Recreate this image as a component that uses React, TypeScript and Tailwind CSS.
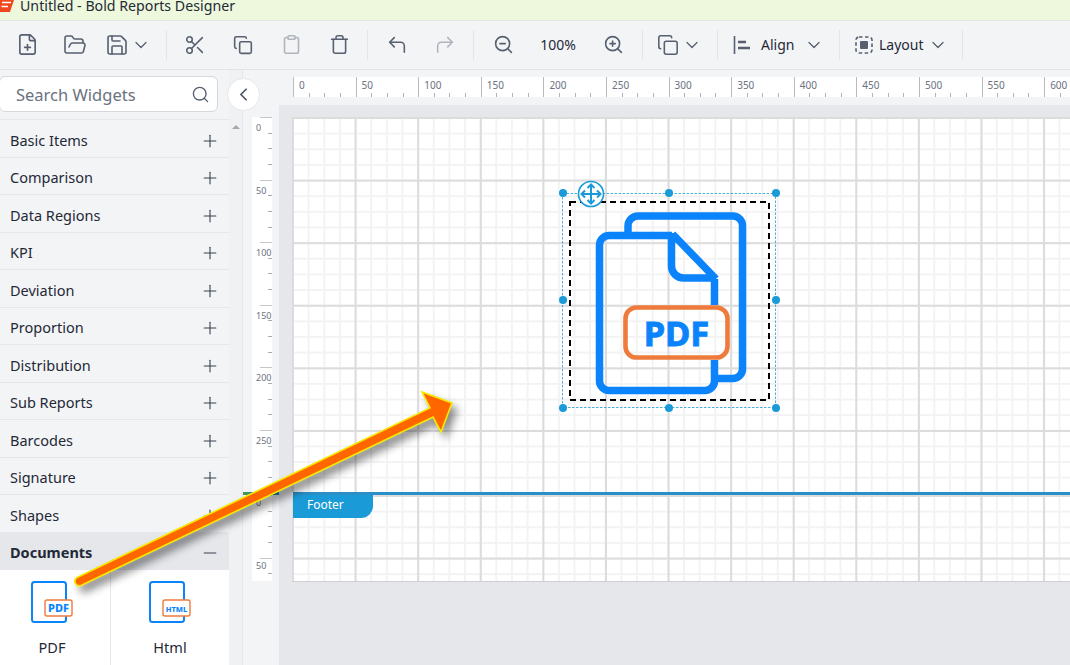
import React from 'react';
import { Plus, Minus, Search, ChevronLeft, ChevronDown, FilePlus, FolderOpen, Save, Scissors, Copy, Clipboard, Trash, CornerUpLeft, CornerUpRight, ZoomIn, ZoomOut } from 'lucide-react';

const widgets = ['Basic Items', 'Comparison', 'Data Regions', 'KPI', 'Deviation', 'Proportion', 'Distribution', 'Sub Reports', 'Barcodes', 'Signature', 'Shapes'];
const gridBg = 'bg-[linear-gradient(to_right,#dcdcdc_2px,transparent_2px),linear-gradient(to_bottom,#dcdcdc_2px,transparent_2px),linear-gradient(to_right,#f3f3f3_1.5px,transparent_1.5px),linear-gradient(to_bottom,#f3f3f3_1.5px,transparent_1.5px)] bg-[size:62.6px_62.6px,62.6px_62.6px,15.65px_15.65px,15.65px_15.65px]';

export default function App() {
  return (
    <div className="relative w-[1070px] h-[665px] overflow-hidden bg-[#f3f4f6] text-[#1f2937] font-['Noto_Sans','Open_Sans',sans-serif]">
      {/* Title bar */}
      <div className="h-[21px] bg-[#eef8dc] border-b border-[#e3e6e3] flex items-start overflow-hidden">
        <svg width="14" height="12" viewBox="0 0 14 12" className="shrink-0">
          <path d="M0 0H14L10 12H0Z" fill="#f0481e" />
          <path d="M2 2.5H11M1.5 6.5H8" stroke="#fff" strokeWidth="1.6" />
        </svg>
        <span className="ml-[6px] -mt-[4px] text-[14.2px] leading-[20px] text-[#1f2937] whitespace-nowrap">Untitled - Bold Reports Designer</span>
      </div>

      <Toolbar />

      <div className="flex h-[595px]">
        <Sidebar />
        {/* scroll strip */}
        <div className="w-[14px] bg-[#f0f1f2] border-r border-[#e5e7eb] pt-[55px] flex justify-center shrink-0">
          <div className="w-0 h-0 border-x-[4px] border-x-transparent border-b-[4px] border-b-[#a8a8a8]" />
        </div>
        {/* vertical ruler column */}
        <div className="w-[36px] shrink-0 pt-[47px] flex flex-col">
          <VRuler labels={['0', '50', '100', '150', '200', '250']} height={375} labelClass="top-[5px]" />
          <div className="h-[3px] bg-[#2382b8] relative">
            <div className="absolute left-0 top-0 h-[3px] w-[6px] bg-[#3f9a54]" />
          </div>
          <VRuler labels={['0', '50']} height={86} labelClass="top-[2px]" />
        </div>
        {/* designer area */}
        <div className="flex-1 min-w-0 flex flex-col">
          <div className="h-[35px] pt-[7px] pl-[14px] shrink-0">
            <HRuler />
          </div>
          <div className="flex-1 bg-[#e5e7eb] pt-[12px] pl-[13px]">
            <div className="relative w-[778px] h-[465px] flex flex-col bg-white border-b border-[#cfcfcf]">
              <div className={`h-[375px] ${gridBg}`} />
              <div className="h-[3px] ml-px bg-[#2b8fc7]" />
              <div className={`h-[86px] ${gridBg}`}>
                <div className="ml-px w-[80px] h-[23px] bg-[#1a9bd7] rounded-br-[12px] pl-[14px] text-white text-[12px] leading-[20px]">Footer</div>
              </div>
              <SelectedPdf />
            </div>
          </div>
        </div>
      </div>

      {/* search panel collapse button */}
      <button className="absolute left-[227px] top-[78px] w-[33px] h-[33px] rounded-full bg-white border border-[#e5e7eb] flex items-center justify-center">
        <ChevronLeft className="w-[21px] h-[21px] text-[#4b5563]" strokeWidth={2} />
      </button>

      {/* annotation arrow */}
      <svg width="1070" height="665" viewBox="0 0 1070 665" className="absolute left-0 top-0 pointer-events-none drop-shadow-[5px_6px_4px_rgba(0,0,0,0.45)]">
        <path d="M77 577.5 L430 408 L422 392 L452 403 L441 432 L433 417 L81 585.5 A4.5 4.5 0 0 1 77 577.5Z" fill="#ff6600" stroke="#f5ea00" strokeWidth="1.6" strokeLinejoin="miter" />
      </svg>
    </div>
  );
}

function Sep({ className = '' }: { className?: string }) {
  return <div className={`w-px h-[30px] bg-[#e2e4e8] shrink-0 ${className}`} />;
}

function ToolBtn({ icon, width = 'w-[48px]' }: { icon: React.ReactNode; width?: string }) {
  return <div className={`${width} h-[30px] flex items-center justify-center shrink-0`}>{icon}</div>;
}

function Toolbar() {
  const on = 'text-[#566070]';
  const off = 'text-[#b0b5bc]';
  const chev = 'w-[20px] h-[20px] text-[#566070]';
  return (
    <div className="h-[49px] border-b border-[#e2e4e8] flex items-center pl-[3px] pb-[1px]">
      <ToolBtn icon={<FilePlus className={`w-[23px] h-[23px] ${on}`} strokeWidth={1.7} />} />
      <ToolBtn icon={<FolderOpen className={`w-[24px] h-[24px] ${on}`} strokeWidth={1.6} />} />
      <div className="w-[67px] h-[30px] flex items-center pl-[6px] shrink-0">
        <Save className={`w-[24px] h-[24px] ${on}`} strokeWidth={1.6} />
        <ChevronDown className={`${chev} ml-[2px]`} strokeWidth={1.5} />
      </div>
      <Sep />
      <div className="ml-[4px] flex">
        <ToolBtn icon={<Scissors className={`w-[22px] h-[22px] ${on}`} strokeWidth={1.7} />} />
        <ToolBtn icon={<Copy className={`w-[20px] h-[20px] ${on}`} strokeWidth={1.9} />} />
        <ToolBtn icon={<Clipboard className={`w-[21px] h-[21px] ${off}`} strokeWidth={1.8} />} />
        <ToolBtn icon={<Trash className={`w-[21px] h-[21px] ${on}`} strokeWidth={1.8} />} />
      </div>
      <Sep className="ml-[4px]" />
      <div className="ml-[5px] flex">
        <ToolBtn icon={<CornerUpLeft className={`w-[22px] h-[22px] ${on}`} strokeWidth={1.7} />} />
        <ToolBtn icon={<CornerUpRight className={`w-[22px] h-[22px] ${off}`} strokeWidth={1.7} />} />
      </div>
      <Sep className="ml-[4px]" />
      <div className="ml-[5px] flex items-center">
        <ToolBtn icon={<ZoomOut className={`w-[21px] h-[21px] ${on}`} strokeWidth={1.8} />} />
        <div className="w-[62px] text-center text-[14px] text-[#1f2937]">100%</div>
        <ToolBtn icon={<ZoomIn className={`w-[21px] h-[21px] ${on}`} strokeWidth={1.8} />} />
      </div>
      <Sep className="ml-[5px]" />
      <div className="w-[74px] h-[30px] flex items-center pl-[14px] shrink-0">
        <Copy className={`w-[22px] h-[22px] ${on}`} strokeWidth={1.7} />
        <ChevronDown className={`${chev} ml-[3px]`} strokeWidth={1.5} />
      </div>
      <Sep />
      <div className="w-[121px] h-[30px] flex items-center pl-[15px] shrink-0">
        <svg width="18" height="20" viewBox="0 0 18 20" fill="none">
          <path d="M1.5 1V19" stroke="#566070" strokeWidth="1.6" />
          <path d="M5 7H13M5 13H17" stroke="#566070" strokeWidth="2.4" />
        </svg>
        <span className="ml-[10px] text-[14px] text-[#1f2937]">Align</span>
        <ChevronDown className={`${chev} ml-[10px]`} strokeWidth={1.5} />
      </div>
      <Sep />
      <div className="w-[122px] h-[30px] flex items-center pl-[15px] shrink-0">
        <svg width="18" height="18" viewBox="0 0 18 18" fill="none">
          <rect x="1" y="1" width="16" height="16" rx="3" stroke="#566070" strokeWidth="1.6" strokeDasharray="3.5 2.5" />
          <rect x="5" y="5" width="8" height="8" rx="1" fill="#566070" />
        </svg>
        <span className="ml-[6px] text-[14px] text-[#1f2937]">Layout</span>
        <ChevronDown className={`${chev} ml-[4px]`} strokeWidth={1.5} />
      </div>
      <Sep />
    </div>
  );
}

function Sidebar() {
  return (
    <div className="w-[229px] shrink-0 flex flex-col">
      <div className="h-[50px] pt-[6px] pr-[11px] border-b border-[#e5e7eb] shrink-0">
        <div className="h-[36px] -ml-px bg-white border border-[#d5d7dc] rounded-md flex items-center justify-between pl-[16px] pr-[7px]">
          <span className="pt-[3px] text-[16.5px] text-[#6b7280]">Search Widgets</span>
          <Search className="w-[19px] h-[19px] text-[#566070]" strokeWidth={1.7} />
        </div>
      </div>
      {widgets.map((w) => (
        <div key={w} className="h-[37.5px] shrink-0 border-b border-[#e5e7eb] flex items-center justify-between pt-[5px] pl-[10px] pr-[9px] text-[14.5px]">
          <span>{w}</span>
          <Plus className="w-[20px] h-[20px] text-[#374151]" strokeWidth={1.3} />
        </div>
      ))}
      <div className="h-[37.5px] shrink-0 bg-[#e5e7eb] flex items-center justify-between pt-[3px] pl-[10px] pr-[9px] text-[14.5px] font-bold">
        <span>Documents</span>
        <Minus className="w-[20px] h-[20px] text-[#374151]" strokeWidth={1.3} />
      </div>
      <div className="flex-1 bg-white flex">
        <DocTile label="PDF" badge="PDF" className="w-[111px] pr-[6px] border-r border-[#e5e7eb]" />
        <DocTile label="Html" badge="HTML" className="flex-1" />
      </div>
    </div>
  );
}

function DocTile({ label, badge, className }: { label: string; badge: string; className: string }) {
  return (
    <div className={`${className} flex flex-col items-center pt-[11px]`}>
      <svg width="44" height="44" viewBox="0 0 44 44">
        <rect x="2" y="1" width="34" height="40" rx="2.5" fill="none" stroke="#0b84fb" strokeWidth="2" />
        <rect x="15" y="19" width="27" height="16" rx="2" fill="#fff" stroke="#ee7b3c" strokeWidth="1.4" />
        <text x="28.5" y="31" textAnchor="middle" fill="#0b84fb" fontWeight="800" fontSize={badge === 'PDF' ? 11 : 7.5} fontFamily="'Noto Sans', sans-serif">{badge}</text>
      </svg>
      <span className="mt-[12px] text-[14.5px] leading-[20px]">{label}</span>
    </div>
  );
}

function HRuler() {
  const labels = Array.from({ length: 13 }, (_, i) => i * 50);
  return (
    <div className="w-[777px] h-[20px] bg-white flex overflow-hidden">
      {labels.map((n) => (
        <div key={n} className="w-[62.6px] shrink-0 h-full relative flex items-end border-l border-[#b9bcc2]">
          <span className="absolute left-[5px] top-[2px] text-[10px] leading-[12px] text-[#6b7280]">{n}</span>
          {[0, 1, 2].map((t) => (
            <div key={t} className="w-[15.65px] h-[4px] border-r border-[#b0b3b8]" />
          ))}
        </div>
      ))}
    </div>
  );
}

function VRuler({ labels, height, labelClass }: { labels: string[]; height: number; labelClass: string }) {
  return (
    <div className="ml-[9px] w-[20px] bg-white overflow-hidden shrink-0" style={{ height }}>
      {labels.map((n) => (
        <div key={n} className="h-[62.6px] relative flex flex-col items-end">
          <div className="w-[12px] h-px bg-[#c4c6ca] shrink-0" />
          <span className={`absolute left-[4px] ${labelClass} text-[9px] leading-[12px] text-[#6b7280]`}>{n}</span>
          {[0, 1, 2].map((t) => (
            <div key={t} className="w-[4px] h-[15.65px] border-b border-[#a9acb1]" />
          ))}
        </div>
      ))}
    </div>
  );
}

function SelectedPdf() {
  const handles = [[563, 193], [669, 193], [776, 193], [563, 300], [776, 300], [563, 408], [669, 408], [776, 408]];
  return (
    <svg width="240" height="250" viewBox="550 170 240 250" fill="none" className="absolute left-[258px] top-[53px]">
      <rect x="562.5" y="193.5" width="213" height="214" stroke="#1a9bd7" strokeWidth="0.8" strokeDasharray="2.5 1.5" />
      <rect x="570" y="202" width="199" height="198" stroke="#000" strokeWidth="2" strokeDasharray="6 4" />
      <path d="M628 238V226a10 10 0 0 1 10-10H733a9.5 9.5 0 0 1 9.5 9.5V369a9.5 9.5 0 0 1-9.5 9.5H717" stroke="#0b84fb" strokeWidth="7.5" />
      <path d="M672 235.5H609a9.5 9.5 0 0 0-9.5 9.5V381a9.5 9.5 0 0 0 9.5 9.5H705a9.5 9.5 0 0 0 9.5-9.5V360M714.5 305V279" stroke="#0b84fb" strokeWidth="7.5" />
      <path d="M671.5 233V266a12 12 0 0 0 12 12H716M672.5 234L716 279" stroke="#0b84fb" strokeWidth="7.5" />
      <rect x="625.5" y="307.5" width="102" height="50" rx="11" stroke="#ee7b3c" strokeWidth="4.6" />
      <text x="676.5" y="346" textAnchor="middle" fill="#0b84fb" stroke="#0b84fb" strokeWidth="0.9" fontSize="34.5" fontWeight="700" fontFamily="'Noto Sans', sans-serif">PDF</text>
      {handles.map(([x, y]) => (
        <circle key={`${x}-${y}`} cx={x} cy={y} r="4" fill="#1a9bd7" />
      ))}
      <circle cx="591" cy="194" r="12.5" fill="#fff" stroke="#1a9bd7" strokeWidth="1.6" />
      <path d="M582 194H600M591 185V203M585 190.5l-3.5 3.5 3.5 3.5M597 190.5l3.5 3.5-3.5 3.5M587.5 188l3.5-3.5 3.5 3.5M587.5 200l3.5 3.5 3.5-3.5" stroke="#1a9bd7" strokeWidth="2" />
    </svg>
  );
}
